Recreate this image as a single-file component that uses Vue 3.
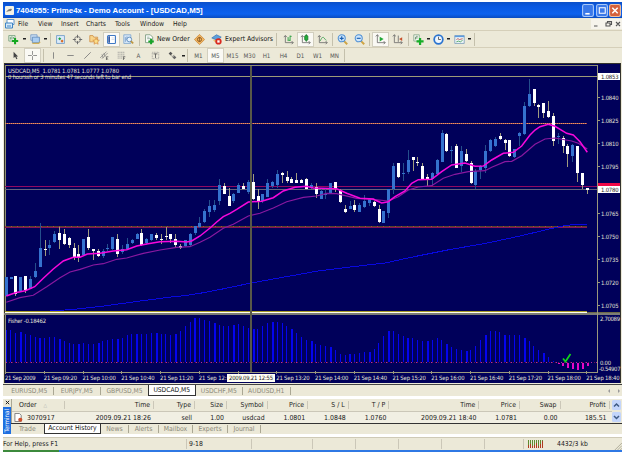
<!--
  App.vue - trading terminal window

  - title bar, menu, two toolbars
  - price chart (candles, two moving averages, levels) with the Fisher window
  - chart tabs, terminal panel with account history, status bar
-->
<template>
  <div class="window">
    <!-- shared toolbar glyphs -->
    <svg class="defs" width="0" height="0">
      <symbol id="i-newchart" viewBox="0 0 14 14"><path d="M1 2h8v7H1z" fill="#e8f4e4" stroke="#6f9a78" /><path d="M3 4v3M5 3v4M7 4v2" stroke="#4f8a5c" /><path d="M9 5v8M5 9h8" stroke="#15a820" stroke-width="2.6" /></symbol>
      <symbol id="i-profiles" viewBox="0 0 14 14"><path d="M1 1h8v7H1z" fill="#cfe2f6" stroke="#6f97c4" /><path d="M3 4h9v7H3z" fill="#a9cdf2" stroke="#5b86b8" /><path d="M3 12h8l2-2" stroke="#cfae58" stroke-width="1.5" fill="none" /></symbol>
      <symbol id="i-market" viewBox="0 0 14 14"><path d="M2 2h10v10H2z" fill="#dcebfb" stroke="#6796c6" /><path d="M4 6l2-2 2 2-2 2z" fill="#23a040" /><path d="M7 9l2-2 2 2-2 2z" fill="#d86a20" /></symbol>
      <symbol id="i-target" viewBox="0 0 14 14"><circle cx="7" cy="7" r="3.8" fill="none" stroke="#777" stroke-width="1.2" /><path d="M7 1v4M7 9v4M1 7h4M9 7h4" stroke="#666" stroke-width="1.2" /></symbol>
      <symbol id="i-folder" viewBox="0 0 14 14"><path d="M1 2h4l1 2h5v6H1z" fill="#f8d58a" stroke="#cf8f45" /><path d="M9 5l1.3 2.7 2.9.3-2.2 2 .6 3L9 11.5l-2.6 1.5.6-3-2.2-2 2.9-.3z" fill="#fbe08a" stroke="#d48438" stroke-width=".8" /></symbol>
      <symbol id="i-panel" viewBox="0 0 14 14"><rect x="2" y="2" width="10" height="10" rx="1" fill="#fff" stroke="#3e78c4" stroke-width="1.4" /><path d="M4 3v8" stroke="#264e9c" stroke-width="2" /><path d="M7 5h4M7 7h4" stroke="#cfd8e6" /></symbol>
      <symbol id="i-tester" viewBox="0 0 14 14"><path d="M1 1h9v11H1z" fill="#d8e8f8" stroke="#7ba3cf" /><path d="M3 4v6M5 3v5" stroke="#6f97c4" /><circle cx="8" cy="7" r="3" fill="#e9f5ff" stroke="#4b7db4" /><path d="M10 9l3 3" stroke="#bd9640" stroke-width="2" /></symbol>
      <symbol id="i-order" viewBox="0 0 14 14"><path d="M2 1h6l3 3v7H2z" fill="#fff" stroke="#6c9072" /><path d="M4 4h3M4 6h5" stroke="#80a088" /><path d="M9 6v7M5.5 9.5h7" stroke="#18a428" stroke-width="2.5" /></symbol>
      <symbol id="i-diamond" viewBox="0 0 14 14"><path d="M7 .5l6.5 6.5L7 13.5.5 7z" fill="#f2b661" stroke="#c8873a" /><circle cx="7" cy="7" r="2.6" fill="none" stroke="#8a5a24" stroke-width="1.2" /><path d="M7 4v6" stroke="#8a5a24" /></symbol>
      <symbol id="i-expert" viewBox="0 0 14 14"><path d="M1 5l6-4 6 3-5 4z" fill="#5ea0dc" stroke="#3f7ab8" /><path d="M2 7q3 5 8 3V6l-3 2z" fill="#e8c070" /><circle cx="9.5" cy="9.5" r="4" fill="#d92a20" /><path d="M8 8h3v3H8z" fill="#fff" /></symbol>
      <symbol id="i-bars" viewBox="0 0 14 14"><path d="M3 2v9h10M1 4l2-2 2 2M11 9l2 2-2 2" stroke="#666" fill="none" /><path d="M6.5 4v5M9 2v7M9 3h2M7 8h2" stroke="#2ca040" stroke-width="1.2" /></symbol>
      <symbol id="i-candles" viewBox="0 0 14 14"><path d="M3 2v9h10M1 4l2-2 2 2M11 9l2 2-2 2" stroke="#666" fill="none" /><path d="M8 0v10" stroke="#16752a" /><rect x="6" y="2" width="4" height="6" rx="1" fill="#23b038" stroke="#16752a" /></symbol>
      <symbol id="i-line" viewBox="0 0 14 14"><path d="M3 2v9h10M1 4l2-2 2 2M11 9l2 2-2 2" stroke="#666" fill="none" /><path d="M4 9q3-7 5-4t3 3" stroke="#3da04f" fill="none" /></symbol>
      <symbol id="i-zoomin" viewBox="0 0 14 14"><path d="M9 9l4 4" stroke="#cfa443" stroke-width="2.4" /><circle cx="6" cy="5.5" r="4.5" fill="#cfe6fb" stroke="#4d8fd4" stroke-width="1.3" /><path d="M3.5 5.5h5M6 3v5" stroke="#1c62b4" stroke-width="1.5" /></symbol>
      <symbol id="i-zoomout" viewBox="0 0 14 14"><path d="M9 9l4 4" stroke="#cfa443" stroke-width="2.4" /><circle cx="6" cy="5.5" r="4.5" fill="#cfe6fb" stroke="#4d8fd4" stroke-width="1.3" /><path d="M3.5 5.5h5" stroke="#1c62b4" stroke-width="1.5" /></symbol>
      <symbol id="i-scroll" viewBox="0 0 14 14"><path d="M3 1v10h10M1 3l2-2 2 2M11 9l2 2-2 2" stroke="#666" fill="none" /><path d="M6 3.5l5 3-5 3z" fill="#23a838" /></symbol>
      <symbol id="i-shift" viewBox="0 0 14 14"><path d="M3 1v10h10M1 3l2-2 2 2M11 9l2 2-2 2M8 2v8" stroke="#666" fill="none" /><path d="M13 4v5L9 6.5z" fill="#c8502a" /></symbol>
      <symbol id="i-indicator" viewBox="0 0 14 14"><path d="M1 1h7v8H1z" fill="#f3faf0" stroke="#86a488" /><path d="M3 7q0-5 3-4M3 5h3" stroke="#567a5a" fill="none" /><path d="M9 5v9M4.5 9.5h9" stroke="#18ae28" stroke-width="2.8" /></symbol>
      <symbol id="i-clock" viewBox="0 0 14 14"><circle cx="7" cy="7" r="5.5" fill="#eef6ff" stroke="#2a74d0" stroke-width="2.2" /><path d="M7 3.5V7h3" stroke="#444" fill="none" /></symbol>
      <symbol id="i-template" viewBox="0 0 14 14"><path d="M1 2h12v10H1z" fill="#eef6f8" stroke="#7799b8" /><path d="M1 3h12" stroke="#5e9ade" stroke-width="2" /><path d="M3 7l2-1 2 1 4-1" stroke="#b04040" fill="none" /><path d="M3 10l3-1 2 1 3-2" stroke="#3c9a50" fill="none" /></symbol>
      <symbol id="i-cursor" viewBox="0 0 14 14"><path d="M4 1v10l2.500-2 1.800 4 1.700-.8-1.800-3.700H11z" fill="#444" /></symbol>
      <symbol id="i-cross" viewBox="0 0 14 14"><path d="M7 0v6M7 8v6M0 7h6M8 7h6" stroke="#777" stroke-width="1.2" /></symbol>
      <symbol id="i-vline" viewBox="0 0 14 14"><path d="M7 2v10" stroke="#777" stroke-width="1.3" /></symbol>
      <symbol id="i-hline" viewBox="0 0 14 14"><path d="M2 7h10" stroke="#777" stroke-width="1.3" /></symbol>
      <symbol id="i-trend" viewBox="0 0 14 14"><path d="M2 12L12 2" stroke="#777" stroke-width="1.3" /></symbol>
      <symbol id="i-channel" viewBox="0 0 14 14"><path d="M0 11L10 1M3 12l9-9M3 5l2 6M6 3l2 6" stroke="#777" fill="none" /><path d="M13 9h-3v5h3M10 11.5h2" stroke="#444" fill="none" /></symbol>
      <symbol id="i-fibo" viewBox="0 0 14 14"><path d="M1 2h11M1 5h11M1 8h11M1 11h7" stroke="#888" stroke-dasharray="2 .6" /><path d="M13 9h-3v5M10 11.5h2" stroke="#444" fill="none" /></symbol>
      <symbol id="i-label" viewBox="0 0 14 14"><rect x="2" y="2" width="10" height="10" fill="none" stroke="#888" stroke-dasharray="1.5 1" /><path d="M4 4.5h6M7 4.5V11" stroke="#555" stroke-width="1.3" /></symbol>
      <symbol id="i-arrows" viewBox="0 0 14 14"><path d="M4 1l3 3-3 3-3-3z" fill="#555" /><path d="M5 7l2 2 2-3" stroke="#666" fill="none" /><path d="M10 7l3 3-3 3-3-3z" fill="#666" /></symbol>
    </svg>

    <header class="titlebar">
      <svg class="app-icon" viewBox="0 0 9 9"><rect width="9" height="9" rx="1" fill="#f4f2e6" /><path d="M1 6q3-4 6-3l-1 2q-2 0-5 1z" fill="#777" /></svg>
      <span class="title">7404955: Prime4x - Demo Account - [USDCAD,M5]</span>
      <div class="controls">
        <svg viewBox="0 0 11 12"><rect x=".5" y=".5" width="10" height="11" rx="1.5" fill="#3b79e8" stroke="#a8c8f8" /><path d="M3 9h4" stroke="#fff" stroke-width="1.5" /></svg>
        <svg viewBox="0 0 11 12"><rect x=".5" y=".5" width="10" height="11" rx="1.5" fill="#3b79e8" stroke="#a8c8f8" /><path d="M3 3.5h5.500v5H3z" fill="none" stroke="#fff" /></svg>
        <svg viewBox="0 0 11 12"><rect x=".5" y=".5" width="10" height="11" rx="1.5" fill="#d4613c" stroke="#efc0a0" /><path d="M3 3.5l5 5M8 3.5l-5 5" stroke="#fff" stroke-width="1.4" /></svg>
      </div>
    </header>

    <nav class="menubar">
      <svg class="menu-icon" viewBox="0 0 10 10"><path d="M2 .5h7v5H2z" fill="#fff" stroke="#5a94cc" /><path d="M.5 4h7v5h-7z" fill="#d8ecfa" stroke="#3f84c4" /><path d="M2 7h4" stroke="#3f84c4" /></svg>
      <span class="m-file">File</span><span class="m-view">View</span><span class="m-insert">Insert</span>
      <span class="m-charts">Charts</span><span class="m-tools">Tools</span><span class="m-window">Window</span><span>Help</span>
      <svg class="mdi" viewBox="0 0 31 10"><path d="M3 7h3.5M15 4h4v3h-4zM16.5 4V2.5h4v3H19M25 3l4 4M29 3l-4 4" fill="none" stroke="#555" stroke-width="1.1" /></svg>
    </nav>

    <div class="toolbar">
      <template v-for="(t, i) in mainTools" :key="i">
        <i v-if="t.sep" class="sep" :style="{ width: t.sep + 'px' }"></i>
        <span v-else-if="t.text" class="tool-text" :style="{ width: t.w + 'px' }">{{ t.text }}</span>
        <span v-else class="tool" :class="{ pressed: t.on }" :style="{ width: (t.w || 17) + 'px' }">
          <svg><use :href="'#i-' + t.icon" /></svg>
        </span>
        <b v-if="t.dd" class="dd" :style="{ width: t.dd + 'px' }"></b>
      </template>
    </div>

    <div class="toolbar second">
      <template v-for="(t, i) in drawTools" :key="i">
        <i v-if="t.sep" class="sep" :style="{ width: t.sep + 'px' }"></i>
        <span v-else class="tool" :class="{ pressed: t.on }">
          <svg v-if="t.icon"><use :href="'#i-' + t.icon" /></svg>
          <em v-else>{{ t.label }}</em>
        </span>
        <b v-if="t.dd" class="dd" :style="{ width: t.dd + 'px' }"></b>
      </template>
    </div>

    <!-- chart, drawn in window coordinates -->
    <svg class="chart" viewBox="3 63 619 321" width="619" height="321" shape-rendering="crispEdges">
      <rect x="3" y="63" width="619" height="321" fill="#ece9d8" />
      <rect x="4" y="63" width="617" height="320" fill="#33332c" />
      <rect x="5" y="64" width="615" height="319" fill="#00005a" />
      <path d="M5 65.5H598M5.5 65V372" stroke="#8f8f72" fill="none" />

      <!-- levels -->
      <path d="M5 76.5H598" stroke="#9c9a78" />
      <path d="M5 123.5H587" stroke="#b83c50" />
      <path d="M5 123.5H587" stroke="#d8a860" stroke-dasharray="1 1" />
      <path d="M5 186.5H598" stroke="#900a62" />
      <path d="M5 189.5H598" stroke="#64647c" />
      <path d="M5 226.5H587" stroke="#55462a" />
      <path d="M5 227.5H587" stroke="#861556" />
      <path d="M5 226.5H587" stroke="#a84040" stroke-dasharray="1 5" />
      <path d="M5 311.5H587" stroke="#a89c28" />
      <path d="M5 312.5H587" stroke="#fffff0" />
      <path d="M587 312.5H620" stroke="#6c6848" />
      <path d="M4 314H620" stroke="#7c7c76" stroke-width="2" />

      <path :d="slowTrend" stroke="#0808e0" fill="none" />

      <g v-for="c in candles" :key="c.x">
        <rect :x="c.x + 1" :y="c.high" width="1" :height="c.low - c.high" :fill="c.up ? '#244f8c' : '#a09c80'" />
        <rect :x="c.x" :y="c.top" width="3" :height="c.h" :fill="c.up ? '#3572cf' : '#fff'" />
      </g>
      <path :d="slowMa" stroke="#8a18a0" stroke-width="1.2" fill="none" shape-rendering="auto" />
      <path :d="fastMa" stroke="#f808dc" stroke-width="1.5" fill="none" shape-rendering="auto" />

      <!-- Fisher histogram -->
      <rect v-for="b in bars" :key="'b' + b.x" :x="b.x" :y="b.y" :width="b.w" :height="b.h" :fill="b.fill" />
      <path d="M6 362.5H598" stroke="#6a1548" stroke-dasharray="1 2" />
      <path d="M6 362.5H598" stroke="#b828a0" stroke-dasharray="1 4" />
      <path d="M563 358.5l2.500 3 5-7.500" stroke="#10d818" stroke-width="1.7" fill="none" shape-rendering="auto" />

      <rect x="250" y="66" width="2" height="307" fill="#585848" />
      <path d="M5 372.5H598M597.5 65V372.5" stroke="#9a987c" fill="none" />

      <g class="chart-text">
        <text x="8" y="73.3" textLength="111">USDCAD,M5&#160; 1.0781 1.0781 1.0777 1.0780</text>
        <text x="8" y="79.4" textLength="123">0 hourssh or 3 minutes 47 seconds left to bar end</text>
        <text x="8" y="322.5" textLength="38">Fisher -0.18462</text>
        <g v-for="p in prices" :key="p[0]">
          <path :d="'M598 ' + (p[1] + .5) + 'h2'" stroke="#9a987c" />
          <text x="601" :y="p[1] + 2.5" textLength="17.5">{{ p[0] }}</text>
        </g>
        <text x="600" y="320.5" textLength="20">2.70089</text>
        <text x="600" y="364.5" textLength="11">0.00</text>
        <text x="599" y="370.7" textLength="21.5">-0.54907</text>
        <g v-for="(t, i) in times" :key="i">
          <path :d="'M' + (Math.round(5 + i * 38.75) + .5) + ' 371v3'" stroke="#9a987c" />
          <text v-if="t" :x="5 + i * 38.75" y="380" :textLength="t.length * 2.78">{{ t }}</text>
        </g>
      </g>

      <rect x="598" y="183" width="22" height="4" fill="#f00848" />
      <rect x="598" y="186" width="22" height="7" fill="#fff" />
      <rect x="598" y="73" width="22" height="7" fill="#fff" />
      <rect x="227" y="374" width="48" height="8" fill="#fffff4" />
      <g class="chart-text dark">
        <text x="601" y="191.7" textLength="17.5">1.0780</text>
        <text x="601" y="78.7" textLength="17.5">1.0853</text>
        <text x="229" y="380" textLength="44">2009.09.21 12:55</text>
      </g>
    </svg>

    <div class="chart-tabs">
      <span v-for="(s, i) in chartTabs" :key="s" :class="{ active: i === 3, before: i === 2 }">{{ s }}</span>
      <svg class="tab-arrows" viewBox="0 0 16 8"><path d="M4 2L2 4l2 2zM12 2l2 2-2 2z" fill="#999" /></svg>
    </div>

    <section class="terminal">
      <aside>
        <svg viewBox="0 0 6 6"><path d="M1 1l4 4M5 1L1 5" stroke="#222" stroke-width="1.2" /></svg>
        <div class="side-label"><span>Terminal</span></div>
      </aside>
      <div class="panel">
        <div class="grid-area">
          <div class="table">
            <div class="row head">
              <span class="order">Order <small>△</small></span>
              <span v-for="(h, i) in headers" :key="i" :class="'c' + i">{{ h }}</span>
            </div>
            <div class="row">
              <span class="order">
                <svg viewBox="0 0 10 10"><path d="M1 .5h5l2 2v7H1z" fill="#fff" stroke="#777" /><circle cx="7" cy="7.5" r="2.3" fill="#d0502c" /></svg>3070917
              </span>
              <span v-for="(v, i) in values" :key="i" :class="'c' + i">{{ v }}</span>
            </div>
          </div>
          <div class="scroll">
            <svg viewBox="0 0 9 10"><rect width="9" height="10" rx="1.5" fill="#c3d5fb" /><path d="M2 6.5L4.5 4 7 6.5" fill="none" stroke="#3e5a84" stroke-width="1.5" /></svg>
            <svg viewBox="0 0 9 10"><rect width="9" height="10" rx="1.5" fill="#c3d5fb" /><path d="M2 4L4.5 6.5 7 4" fill="none" stroke="#3e5a84" stroke-width="1.5" /></svg>
          </div>
        </div>
        <div class="term-tabs">
          <span class="t-trade">Trade</span><span class="t-active">Account History</span>
          <span class="t-news">News</span><span class="t-alerts">Alerts</span><span class="t-mail">Mailbox</span>
          <span class="t-experts">Experts</span><span class="t-journal">Journal</span>
        </div>
      </div>
    </section>

    <footer class="status">
      <span class="help">For Help, press F1</span>
      <span class="profile">9-18</span>
      <span class="s1"></span><span class="s2"></span><span class="s2"></span><span class="s2"></span><span class="s2"></span><span class="s3"></span>
      <span class="traffic">
        <svg viewBox="0 0 15 8" shape-rendering="crispEdges">
          <path d="M.5 0v8M2.5 0v8M4.5 0v8M6.5 0v8M8.5 0v8M10.5 0v8M12.5 0v8M14.5 0v8" stroke="#5e8c30" />
          <path d="M.5 5v3M2.5 4v4M4.5 6v2M6.5 5v3M8.5 3v5M10.5 6v2M12.5 4v4M14.5 1v7" stroke="#b03a20" />
        </svg>
        4432/3 kb
      </span>
      <svg class="grip" viewBox="0 0 9 9"><path d="M1 9l8-8M4 9l5-5M7 9l2-2" stroke="#aaa794" /></svg>
    </footer>
    <div class="taskbar"><i></i></div>
  </div>
</template>

<script setup>
const mainTools = [
  { icon: 'newchart', dd: 4.5 }, { icon: 'profiles', dd: 4.5 }, { sep: 4 },
  { icon: 'market' }, { icon: 'target' }, { icon: 'folder' }, { icon: 'panel', on: true }, { icon: 'tester' },
  { sep: 4.5 }, { icon: 'order', w: 15.5 }, { text: 'New Order', w: 34 },
  { icon: 'diamond' }, { icon: 'expert' }, { text: 'Expert Advisors', w: 48 }, { sep: 7 },
  { icon: 'bars' }, { icon: 'candles', on: true }, { icon: 'line' }, { sep: 2.5 },
  { icon: 'zoomin' }, { icon: 'zoomout' }, { sep: 4.5 },
  { icon: 'scroll', on: true }, { icon: 'shift' }, { sep: 5.5 },
  { icon: 'indicator', w: 13, dd: 7.5 }, { icon: 'clock', w: 13, dd: 7.5 }, { icon: 'template', w: 13, dd: 7.5 }, { sep: 2 },
];

const drawTools = [
  { icon: 'cursor' }, { icon: 'cross', on: true }, { sep: 4 },
  { icon: 'vline' }, { icon: 'hline' }, { icon: 'trend' }, { icon: 'channel' }, { icon: 'fibo' },
  { label: 'A' }, { icon: 'label' }, { icon: 'arrows', dd: 4 }, { sep: 5 },
  { label: 'M1' }, { label: 'M5', on: true }, { label: 'M15' }, { label: 'M30' }, { label: 'H1' },
  { label: 'H4' }, { label: 'D1' }, { label: 'W1' }, { label: 'MN' }, { sep: 2 },
];

// Bars are given in thirds of a pixel from a base line: top, bottom, high, low, up
const STEP = 4.842;
const blocks = [
  { base: 190, rows: [
    [262, 318, 262, 318, 1], [262, 267, 262, 267, 1], [257, 312, 257, 318, 0], [262, 304, 262, 306, 1],
    [257, 300, 257, 308, 0], [266, 296, 258, 298, 1], [243, 262, 220, 264, 1], [174, 230, 98, 230, 1],
    [177, 180, 150, 198, 0], [165, 174, 150, 196, 1], [133, 157, 124, 160, 1], [128, 150, 112, 178, 0],
    [131, 162, 118, 165, 0], [144, 165, 141, 175, 0], [173, 200, 160, 211, 0], [192, 202, 165, 215, 0],
    [147, 195, 147, 197, 1], [141, 175, 116, 180, 0], [178, 184, 178, 210, 0], [184, 197, 178, 202, 0],
    [183, 197, 178, 203, 1], [173, 178, 162, 182, 1], [141, 178, 141, 181, 1], [147, 192, 133, 200, 0],
    [176, 187, 165, 192, 1], [163, 178, 145, 181, 1], [149, 160, 147, 162, 1], [132, 147, 130, 147, 1],
    [128, 165, 118, 168, 0], [147, 158, 145, 165, 1], [133, 150, 131, 153, 1], [136, 143, 130, 150, 0],
    [148, 151, 133, 162, 0], [139, 142, 112, 150, 0], [131, 147, 131, 159, 0], [147, 165, 133, 175, 0],
    [168, 174, 163, 178, 0], [150, 168, 150, 170, 1], [133, 165, 130, 168, 1], [109, 130, 109, 134, 1],
    [99, 110, 82, 115, 1], [63, 95, 58, 98, 1], [48, 67, 30, 80, 1],
  ] },
  { base: 120, rows: [
    [255, 270, 240, 275, 1], [195, 242, 178, 255, 1], [197, 222, 190, 222, 0], [227, 257, 205, 257, 0],
    [222, 242, 220, 250, 1], [195, 220, 188, 220, 1], [197, 207, 190, 207, 0], [187, 215, 180, 222, 1],
    [185, 238, 163, 240, 0], [228, 243, 208, 268, 0], [222, 243, 222, 250, 1], [190, 232, 178, 232, 1],
    [187, 197, 184, 205, 1], [162, 195, 150, 205, 1], [158, 165, 155, 188, 0], [171, 182, 152, 190, 0],
    [176, 188, 170, 188, 0], [180, 188, 158, 188, 0], [180, 188, 177, 190, 0], [177, 207, 175, 207, 0],
    [195, 200, 188, 207, 1], [202, 222, 188, 235, 0], [213, 236, 205, 238, 1], [221, 224, 208, 237, 1],
    [190, 218, 190, 222, 1], [186, 207, 185, 215, 0], [210, 246, 207, 250, 0], [267, 275, 255, 280, 0],
    [257, 267, 242, 268, 1], [255, 270, 240, 275, 0], [256, 275, 250, 275, 1], [243, 260, 225, 265, 1],
    [238, 248, 238, 258, 1], [246, 257, 243, 260, 0], [267, 305, 255, 308, 0], [272, 308, 272, 310, 1],
    [207, 280, 207, 295, 1],
  ] },
  { base: 65, rows: [
    [302, 373, 295, 388, 1], [294, 337, 294, 340, 0], [323, 326, 295, 348, 1], [284, 322, 255, 328, 1],
    [277, 286, 275, 318, 0], [291, 295, 277, 304, 0], [303, 342, 294, 342, 0], [337, 345, 328, 362, 0],
    [323, 342, 320, 362, 1], [285, 328, 283, 330, 1], [203, 290, 195, 290, 1], [206, 257, 203, 262, 0],
    [255, 258, 243, 294, 1], [242, 310, 237, 310, 0], [257, 302, 242, 320, 1], [266, 287, 253, 292, 0],
    [294, 355, 287, 357, 0], [318, 360, 312, 373, 1], [302, 315, 300, 343, 1], [257, 308, 240, 325, 1],
    [225, 257, 222, 262, 1], [222, 243, 217, 245, 1], [212, 222, 203, 226, 0], [225, 235, 222, 256, 0],
    [225, 273, 225, 275, 0], [253, 277, 253, 280, 1], [204, 212, 200, 243, 1], [123, 207, 112, 210, 1],
    [86, 122, 42, 126, 1], [72, 113, 72, 123, 0], [119, 125, 117, 158, 0], [114, 144, 114, 158, 0],
    [137, 156, 108, 158, 0], [152, 227, 145, 242, 0], [213, 217, 203, 237, 1], [219, 242, 212, 265, 0],
    [243, 268, 236, 305, 0], [240, 272, 237, 292, 1], [242, 325, 242, 350, 0], [325, 360, 323, 373, 0],
    [369, 374, 369, 388, 0],
  ] },
];

const candles = blocks
  .flatMap(b => b.rows.map(r => [...r.slice(0, 4).map(v => Math.round(b.base + v / 3)), r[4]]))
  .map(([top, bottom, high, low, up], i) => ({
    x: Math.round(4.8 + i * STEP), top, h: Math.max(1, bottom - top), high, low, up,
  }));

// Fisher values, same units, base line at 362
const fisher = [
  60, 60, 69, 66, 72, 75, 81, 84, 84, 81, 81, 87, 93, 99, 101, 101, 99, 101, 101, 98, 93, 90, 87, 87, 84, 76, 72, 72, 72, 72,
  69, 69, 72, 72, 75, 72, 63, 48, 36, 24, 24, 30, 33, 39, 45, 48, 48, 45, 42, 48, 54, 57, 57, 48, 39, 36, 36, 39, 48, 57,
  69, 81, 90, 94, 102, 105, 108, 111, 120, 132, 135, 132, 132, 129, 126, 126, 117, 99, 78, 63, 63, 72, 78, 84, 84, 90, 93, 93, 90, 84,
  90, 102, 111, 117, 120, 123, 120, 108, 90, 75, 63, 63, 66, 75, 75, 75, 75, 84, 93, 108, 120, 129, 141, 153, 162, 168, 174, 177, 179, 176, 168,
];
const bars = fisher.map((v, i) => {
  const y = Math.round(310 + v / 3);
  const x = Math.round(5.6 + i * STEP);
  return v > 157
    ? { x, y: 363, w: 2, h: Math.max(1, y - 363), fill: '#e808c8' }
    : { x, y, w: i % 4 === 3 ? 2 : 1, h: 362 - y, fill: '#0404f0' };
});

// Builds a path out of [x, y] pairs
const line = pts => 'M' + pts.map(p => p.join(' ')).join('L');
const at = (ox, oy, pts) => pts.map(([x, y]) => [(ox + x / 3).toFixed(1), (oy + y / 3).toFixed(1)]);

const fastMa = line([
  ...at(0, 190, [[19, 318], [46, 308], [76, 302], [104, 290], [130, 265], [160, 237], [190, 213], [220, 202], [240, 202], [262, 192], [300, 190], [340, 183], [380, 179], [410, 168], [440, 162], [480, 155], [530, 154], [560, 156], [575, 153], [600, 138], [630, 114]]),
  ...at(180, 120, [[110, 306], [130, 290], [150, 280], [170, 268], [205, 246], [245, 244], [280, 233], [310, 213], [345, 202], [380, 199], [400, 204], [470, 206], [500, 220], [540, 235], [580, 237]]),
  ...at(375, 65, [[0, 405], [20, 414], [40, 410], [60, 395], [90, 378], [110, 355], [130, 344], [170, 343], [200, 320], [230, 300], [270, 294], [300, 304], [325, 303], [350, 285], [385, 265], [415, 262], [440, 243], [465, 210], [480, 195], [495, 185], [520, 178], [540, 184], [575, 205], [595, 210], [615, 230], [637, 262]]),
]);
const slowMa = line([
  ...at(0, 190, [[19, 337], [60, 323], [100, 316], [140, 290], [180, 263], [210, 246], [240, 238], [280, 225], [310, 221], [350, 208], [380, 204], [430, 190], [480, 180], [530, 172], [570, 170], [600, 157], [630, 142]]),
  ...at(180, 120, [[130, 325], [160, 313], [205, 288], [240, 280], [280, 264], [320, 245], [370, 232], [410, 228], [440, 220], [470, 221], [530, 235], [580, 238]]),
  ...at(375, 65, [[0, 404], [40, 408], [70, 395], [100, 375], [130, 366], [170, 362], [205, 340], [240, 328], [280, 320], [330, 317], [350, 307], [390, 290], [410, 289], [440, 272], [480, 238], [510, 222], [540, 219], [590, 228], [610, 235], [637, 252]]),
]);
const slowTrend = line([
  [50, 311], [72, 309.5], [100, 306.5], [133, 302], [167, 297.5], [187, 295.3], [206, 292.3], [225, 288.5], [251, 283], [290, 276],
  [318, 271], [350, 267], [385, 263], [415, 256.5], [450, 249.5], [485, 243.5], [520, 236], [545, 230], [565, 225.5], [575, 224.5], [587, 224.5],
]);

const prices = [
  ['1.0840', 97], ['1.0825', 120], ['1.0810', 143], ['1.0795', 166], ['1.0765', 213],
  ['1.0750', 236], ['1.0735', 259], ['1.0720', 282], ['1.0705', 305],
];
// labels around 12:40 give way to the crosshair time box
const times = [
  '21 Sep 2009', '21 Sep 09:20', '21 Sep 10:00', '21 Sep 10:40', '21 Sep 11:20', '21 Sep 12:', '', '21 Sep 13:20',
  '21 Sep 14:00', '21 Sep 14:40', '21 Sep 15:20', '21 Sep 16:00', '21 Sep 16:40', '21 Sep 17:20', '21 Sep 18:00', '21 Sep 18:40',
];

const chartTabs = ['EURUSD,M5', 'EURJPY,M5', 'GBPUSD,M5', 'USDCAD,M5', 'USDCHF,M5', 'AUDUSD,H1'];
const headers = ['Time', 'Type', 'Size', 'Symbol', 'Price', 'S / L', 'T / P', 'Time', 'Price', 'Swap', 'Profit'];
const values = ['2009.09.21 18:26', 'sell', '1.00', 'usdcad', '1.0801', '1.0848', '1.0760', '2009.09.21 18:40', '1.0781', '0.00', '185.51'];
</script>

<style>
body { margin: 0; background: #fff; }
</style>

<style scoped>
.window {
  width: 625px;
  height: 452px;
  box-sizing: border-box;
  padding: 2px 3px 0;
  display: flex;
  flex-direction: column;
  overflow: hidden;
  background: #fff;
  font-family: "DejaVu Sans Condensed", "DejaVu Sans", sans-serif;
  font-stretch: condensed;
  font-size: 6.8px;
  color: #222;
  white-space: nowrap;
}
.defs { display: block; flex: none; }
svg { display: block; flex: none; }

.titlebar {
  flex: none;
  height: 16px;
  display: flex;
  align-items: center;
  padding: 0 1px 0 2px;
  background: linear-gradient(#0c50c8, #0a58e0 25%, #0d62ee 75%, #0a4cc0);
}
.app-icon { width: 9px; height: 9px; margin-right: 2px; }
.title { width: 190px; color: #fff; font: bold 7.85px "Liberation Sans", sans-serif; }
.controls { display: flex; gap: 1.5px; margin-left: auto; }
.controls svg { width: 12px; height: 13px; }

.menubar {
  flex: none;
  height: 12px;
  display: flex;
  align-items: center;
  padding-left: 2px;
  background: #ece9d8;
}
.menu-icon { width: 10px; height: 10px; margin-right: 3px; }
.m-file { width: 20px; }
.m-view { width: 23px; }
.m-insert { width: 25px; }
.m-charts { width: 29px; }
.m-tools { width: 25px; }
.m-window { width: 33px; }
.mdi { width: 31px; height: 10px; margin-left: auto; background: #f6f4ec; }

.toolbar {
  flex: none;
  height: 17px;
  display: flex;
  align-items: center;
  padding-left: 2px;
  border-top: 1px solid #d5cfb9;
  background: #ece9d8;
  box-sizing: border-box;
}
.toolbar.second { height: 16px; padding-left: 4px; }
.tool {
  flex: none;
  width: 17px;
  height: 15px;
  display: flex;
  align-items: center;
  justify-content: center;
}
.tool.pressed { background: #faf9f4; box-shadow: inset 0 0 0 1px #d2cfbf; }
.tool svg { width: 11px; height: 11px; }
.second .tool svg { width: 9px; height: 9px; }
.tool em { font-style: normal; font-size: 6.2px; color: #555; }
.tool-text { flex: none; font-size: 6.8px; color: #111; }
.sep {
  flex: none;
  height: 13px;
  background: linear-gradient(#c4c0ac, #c4c0ac) center / 1px 100% no-repeat;
}
.dd {
  flex: none;
  height: 2px;
  background: linear-gradient(#222, #222) center / 3px 1.5px no-repeat;
}

.chart-text { font-size: 5.9px; fill: #e4e4d8; }
.chart-text.dark { fill: #222; }

.chart-tabs {
  flex: none;
  height: 12px;
  display: flex;
  align-items: center;
  padding-left: 3px;
  border-top: 1px solid #444;
  box-sizing: border-box;
  background: #ece9d8;
  color: #8a8878;
  font-size: 6.7px;
}
.chart-tabs span {
  width: 47.5px;
  box-sizing: border-box;
  text-align: center;
  border-right: 1px solid #aaa794;
  line-height: 8px;
}
.chart-tabs span.before { border-right: 0; width: 47px; }
.chart-tabs span.active {
  height: 11px;
  line-height: 10px;
  background: #fff;
  color: #111;
  border: 1px solid #333;
  border-top: 0;
}
.tab-arrows { width: 16px; height: 8px; margin-left: auto; }

.terminal {
  flex: none;
  height: 35px;
  margin-top: 3px;
  display: flex;
  background: #ece9d8;
}
aside { width: 8px; display: flex; flex-direction: column; align-items: center; }
aside svg { width: 5px; height: 5px; margin: 1px 0 2px; }
.side-label {
  width: 8px;
  height: 27px;
  display: flex;
  align-items: center;
  justify-content: center;
  background: #1f6fe0;
}
.side-label span { writing-mode: vertical-rl; transform: rotate(180deg); color: #fff; font-size: 6.2px; line-height: 8px; }
.panel { flex: 1; min-width: 0; }
.grid-area { display: flex; height: 25px; border-bottom: 1px solid #333; box-sizing: border-box; }
.table { flex: 1; border-left: 1px solid #aaa794; }
.row { display: flex; align-items: center; height: 11px; font-size: 6.9px; background: #f1efe3; }
.row span { flex: none; box-sizing: border-box; text-align: right; padding-right: 3px; }
.row.head { height: 13px; background: #ece9d8; border-bottom: 1px solid #cbc7b8; box-sizing: border-box; }
.row.head span { border-right: 1px solid #cbc7b8; line-height: 8px; }
.row .order { width: 53px; display: flex; align-items: center; padding-left: 2px; text-align: left; }
.row.head .order { padding-left: 7px; }
.row .order svg { width: 9px; height: 9px; margin-right: 4px; }
.order small { color: #aaa; font-size: 5px; margin-left: 7px; }
.c0 { width: 89px; }
.c1 { width: 41px; }
.c2 { width: 32px; }
.c3, .c4, .c5, .c6, .c8, .c9 { width: 40.6px; }
.c7 { width: 90px; }
.c10 { width: 49px; }
.scroll { width: 10px; display: flex; flex-direction: column; gap: 2px; padding: 1px 0; }
.scroll svg { width: 9px; height: 10px; }

.term-tabs { display: flex; align-items: center; height: 10px; color: #8a8878; font-size: 6.8px; }
.term-tabs span { box-sizing: border-box; line-height: 8px; }
.t-trade { width: 33px; padding-left: 8px; }
.term-tabs .t-active {
  width: 57px;
  line-height: 9px;
  text-align: center;
  background: #fff;
  color: #111;
  border: 1px solid #333;
  border-top: 0;
}
.t-news, .t-alerts, .t-mail, .t-experts, .t-journal { text-align: center; border-right: 1px solid #aaa794; }
.t-news { width: 28px; }
.t-alerts { width: 30px; }
.t-mail { width: 34px; }
.t-experts { width: 35px; }
.t-journal { width: 33px; }

.status {
  flex: none;
  height: 13px;
  margin-top: 3px;
  display: flex;
  align-items: center;
  border-top: 1px solid #cfcab6;
  background: #ece9d8;
  font-size: 6.8px;
  box-sizing: border-box;
}
.status > span { box-sizing: border-box; height: 10px; line-height: 10px; border-right: 1px solid #cbc7b8; }
.help { width: 184px; }
.profile { width: 65px; padding-left: 2px; }
.s1 { width: 61px; }
.s2 { width: 43px; }
.s3 { width: 39px; }
.status > .traffic { display: flex; align-items: center; gap: 14px; flex: 1; padding-left: 4px; border: 0; }
.traffic svg { width: 15px; height: 8px; }
.grip { width: 8px; height: 8px; align-self: flex-end; }
.taskbar { flex: none; height: 2px; background: #2f78e4; }
.taskbar i { display: block; width: 56px; height: 2px; background: #3c8a3c; }
</style>
